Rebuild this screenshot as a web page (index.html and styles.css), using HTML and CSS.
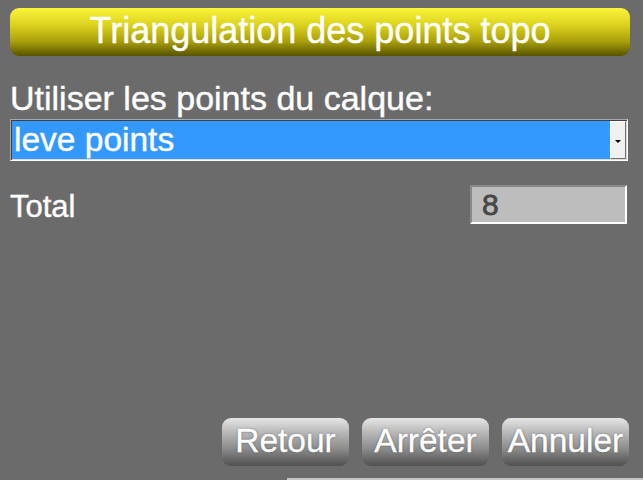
FILE: index.html
```html
<!DOCTYPE html>
<html lang="fr">
<head>
<meta charset="utf-8">
<title>Triangulation des points topo</title>
<link rel="stylesheet" href="styles.css">
</head>
<body>
<div class="screen">
  <div class="title">Triangulation des points topo</div>
  <div class="label">Utiliser les points du calque:</div>
  <div class="select">
    <div class="select-value">leve points</div>
    <div class="select-arrow"><span class="tri"></span></div>
  </div>
  <div class="total-row">
    <div class="total-label">Total</div>
    <div class="total-box">8</div>
  </div>
  <div class="spacer"></div>
  <div class="buttons">
    <div class="btn">Retour</div>
    <div class="btn">Arrêter</div>
    <div class="btn">Annuler</div>
  </div>
  <div class="bottom-line"></div>
</div>
</body>
</html>
```

FILE: styles.css
```css
html, body {
  margin: 0;
  padding: 0;
  background: #6b6b6b;
}
.screen {
  width: 643px;
  height: 480px;
  display: flex;
  flex-direction: column;
  font-family: "Liberation Sans", Arial, sans-serif;
  color: #ffffff;
  overflow: hidden;
  -webkit-text-stroke: 0.4px currentColor;
}
.title {
  margin: 8px 13px 0 10px;
  height: 48px;
  border-radius: 9px;
  background: linear-gradient(to bottom, #faf43a 0%, #dcd31e 35%, #a89f0a 70%, #585200 100%);
  display: flex;
  align-items: center;
  justify-content: center;
  font-size: 36px;
  line-height: 1;
  padding-bottom: 3px;
  box-sizing: border-box;
}
.label {
  margin: 25px 0 0 10px;
  font-size: 34px;
  line-height: 34px;
  height: 34px;
}
.select {
  margin: 4px 15px 0 10px;
  height: 42px;
  box-sizing: border-box;
  display: flex;
  border-top: 1px solid #a8a8a8;
  border-left: 1px solid #a8a8a8;
  border-bottom: 1px solid #ffffff;
  border-right: 1px solid #ffffff;
  box-shadow: inset 1px 1px 0 #404040, inset -1px -1px 0 #dcdcdc;
  padding: 1px;
}
.select-value {
  flex: 1;
  background: #3399ff;
  font-size: 33.5px;
  line-height: 38px;
  padding-left: 2px;
}
.select-arrow {
  width: 16px;
  background: #f0f0f0;
  box-sizing: border-box;
  border-top: 1px solid #ffffff;
  border-left: 1px solid #ffffff;
  border-right: 1px solid #707070;
  border-bottom: 1px solid #707070;
  display: flex;
  align-items: center;
  justify-content: center;
}
.tri {
  width: 0;
  height: 0;
  border-left: 3px solid transparent;
  border-right: 3px solid transparent;
  border-top: 3px solid #000000;
  margin-top: 2px;
  -webkit-text-stroke: 0;
}
.total-row {
  margin: 21px 16px 0 10px;
  display: flex;
  justify-content: space-between;
  align-items: center;
}
.total-label {
  font-size: 31px;
  line-height: 38px;
  padding-top: 6px;
}
.total-box {
  width: 157px;
  height: 39px;
  box-sizing: border-box;
  background: #bdbdbd;
  border-top: 2px solid #8a8a8a;
  border-left: 2px solid #8a8a8a;
  border-bottom: 2px solid #ffffff;
  border-right: 2px solid #ffffff;
  color: #474747;
  font-size: 30px;
  line-height: 35px;
  padding-left: 10px;
  -webkit-text-stroke: 0.8px #474747;
}
.spacer {
  flex: 1;
}
.buttons {
  display: flex;
  justify-content: flex-end;
  gap: 13px;
  margin-right: 14px;
}
.btn {
  width: 127px;
  height: 48px;
  border-radius: 9px;
  background: linear-gradient(to bottom, #e6e6e6 0%, #b8b8b8 30%, #8a8a8a 65%, #505050 100%);
  display: flex;
  align-items: center;
  justify-content: center;
  font-size: 33.5px;
  line-height: 1;
  text-shadow: 0 0 2px #404040;
  box-sizing: border-box;
  padding-bottom: 2px;
}
.bottom-line {
  margin: 12px 0 0 287px;
  height: 2px;
  background: #c4c4c4;
}
```
